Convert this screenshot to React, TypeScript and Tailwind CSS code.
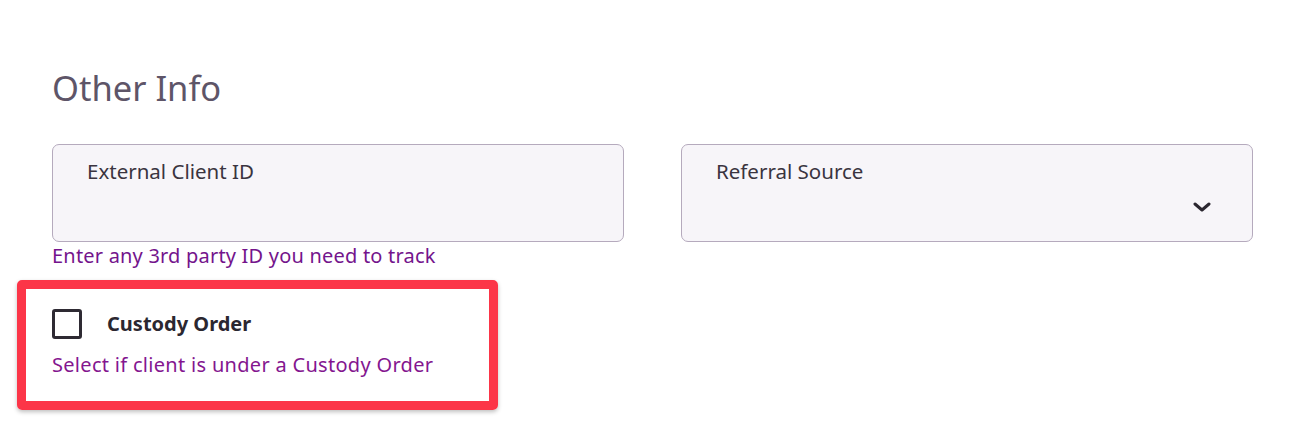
import React from "react";

export default function App() {
  return (
    <div className="w-[1297px] h-[435px] bg-white font-['Noto_Sans',sans-serif] relative">
      <div className="pl-[52px] pt-[68px] pr-[44px]">
        <h2 className="text-[34.5px] leading-[40px] text-[#5e5568] font-normal">Other Info</h2>
        <div className="mt-[36px] grid grid-cols-2 gap-[57px]">
          <div>
            <div className="h-[98px] rounded-[7px] border border-[#b5aabd] bg-[#f7f5f9] pl-[34px] pt-[13px]">
              <span className="text-[20.5px] leading-[26px] text-[#3a3440]">External Client ID</span>
            </div>
            <div className="mt-[2px] text-[20px] tracking-[0.2px] leading-[24px] text-[#74148c]">Enter any 3rd party ID you need to track</div>
          </div>
          <div>
            <div className="h-[98px] rounded-[7px] border border-[#b5aabd] bg-[#f7f5f9] pl-[34px] pt-[13px] flex justify-between">
              <span className="text-[20.5px] leading-[26px] text-[#3a3440]">Referral Source</span>
              <svg width="18" height="10" viewBox="0 0 18 10" className="mt-[44px] mr-[41px]">
                <path d="M2 2 L9 8 L16 2" fill="none" stroke="#2b2730" strokeWidth="3" strokeLinecap="round" strokeLinejoin="round" />
              </svg>
            </div>
          </div>
        </div>
      </div>
      <div className="absolute left-[17px] top-[280px] w-[481px] h-[130px] border-[9px] border-[#fc3548] rounded-[5px] shadow-[0_2px_4px_rgba(0,0,0,0.25)]" />
      <div className="pl-[52px] pt-[41px]">
        <div className="flex items-center">
          <div className="w-[30px] h-[30px] border-[3px] border-[#2e2a33] rounded-[3px]" />
          <span className="ml-[25px] text-[20px] font-bold text-[#2b2730]">Custody Order</span>
        </div>
        <div className="mt-[14px] text-[20px] tracking-[0.3px] leading-[24px] text-[#84168f]">Select if client is under a Custody Order</div>
      </div>
    </div>
  );
}
